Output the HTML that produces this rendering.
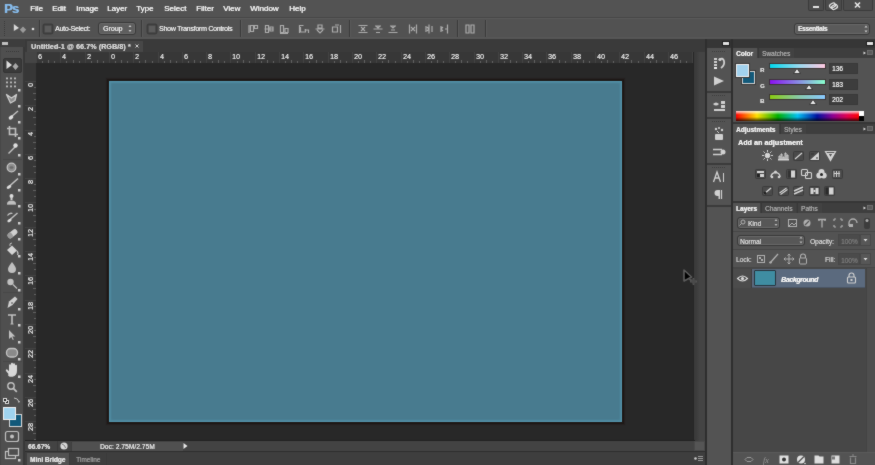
<!DOCTYPE html>
<html><head><meta charset="utf-8">
<style>
*{margin:0;padding:0;box-sizing:border-box}
html,body{width:875px;height:465px;overflow:hidden;background:#535353;font-family:"Liberation Sans",sans-serif;color:#e0e0e0}
.a{position:absolute}
svg{position:absolute;overflow:visible}
#menubar{left:0;top:0;width:875px;height:17px;background:#535353}
.m{position:absolute;top:3.5px;font-size:8px;color:#f2f2f2;line-height:10px;text-shadow:0.4px 0 0 #f2f2f2}
#logo{left:4px;top:1px;font-size:13px;font-weight:bold;color:#86baea;letter-spacing:-0.8px;line-height:15px;text-shadow:0.5px 0 0 #86baea}
#opts{left:0;top:17px;width:875px;height:22px;background:#525252;border-top:1px solid #474747;box-shadow:inset 0 1px 0 #5a5a5a,inset 0 -2px 0 #565656}
.sep{position:absolute;top:20px;width:2px;height:17px;background:#3a3a3a;border-right:1px solid #5a5a5a}
.chk{position:absolute;width:8px;height:8px;background:#5c5c5c;border:1px solid #4a4a4a;border-radius:1px;box-shadow:0 0 0 1.5px #3c3c3c}
.ot{position:absolute;font-size:7px;color:#e8e8e8;line-height:8px;white-space:nowrap;text-shadow:0.3px 0 0 currentColor}
.dd{position:absolute;background:#5e5e5e;border:1px solid #393939;border-radius:3px;box-shadow:inset 0 0 0 1px #686868}
#toolbar{left:0;top:39px;width:25px;height:426px;background:#4f4f4f;border-right:2px solid #383838;border-left:1px solid #474747}
#toolhdr{left:0;top:39px;width:25px;height:8px;background:#3d3d3d}
#docarea{left:25px;top:39px;width:680px;height:413px;background:#3a3a3a}
#tab{left:27px;top:41px;width:116px;height:11px;background:#474747}
#hruler{left:36px;top:52px;width:659px;height:11px;background:#373737}
#vruler{left:25px;top:63px;width:11px;height:378px;background:#373737}
#corner{left:25px;top:52px;width:11px;height:11px;background:#454545}
#paste{left:36px;top:63px;width:658px;height:378px;background:#282828}
#doc{left:109px;top:81px;width:513px;height:341px;background:#487b8f;box-shadow:0 0 0 2px #1d1816,0 0 1px 3px #242020,inset 0 0 1px 1px #5697ad,inset 0 0 2px 2px #4e88a0}
#vscroll{left:693px;top:52px;width:12px;height:389px;background:linear-gradient(90deg,#262626 0,#262626 1px,#3a3a3a 1px,#3b3b3b 3px,#444 7px,#444)}
#status{left:25px;top:441px;width:670px;height:10px;background:#434343;box-shadow:0 -1px 0 #222}
#bottombar{left:25px;top:451px;width:680px;height:14px;background:#3e3e3e;border-top:1px solid #2e2e2e}
#iconcol{left:705px;top:39px;width:27px;height:426px;background:#363636}
#iconbox{left:707px;top:48px;width:24px;height:417px;background:#535353}
#panel{left:731px;top:39px;width:144px;height:426px;background:#363636}
.rl{position:absolute;font-size:7px;line-height:7px;color:#e0e0e0;text-shadow:0.3px 0 0 #e0e0e0}
.rv{width:5px;word-break:break-all;text-align:center;line-height:6px;font-size:6px}
</style></head><body><svg width="0" height="0" style="position:absolute"><filter id="bl" x="0" y="0" width="100%" height="100%" color-interpolation-filters="sRGB"><feConvolveMatrix order="3" kernelMatrix="1 2 1 2 24 2 1 2 1" edgeMode="duplicate"/></filter></svg><div id="wrap" style="position:absolute;left:0;top:0;width:875px;height:465px;background:#535353;filter:url(#bl)">
<div id="menubar" class="a">
  <div id="logo" class="a">Ps</div>
  <span class="m" style="left:30px">File</span>
  <span class="m" style="left:52px">Edit</span>
  <span class="m" style="left:76px">Image</span>
  <span class="m" style="left:107px">Layer</span>
  <span class="m" style="left:136px">Type</span>
  <span class="m" style="left:164px">Select</span>
  <span class="m" style="left:196px">Filter</span>
  <span class="m" style="left:223px">View</span>
  <span class="m" style="left:250px">Window</span>
  <span class="m" style="left:289px">Help</span>
</div>
<div id="opts" class="a"></div>

<svg style="left:0;top:0" width="875" height="40">
 <g fill="#3a3a3a">
  <rect x="4" y="21" width="1" height="1"/><rect x="4" y="23" width="1" height="1"/><rect x="4" y="25" width="1" height="1"/><rect x="4" y="27" width="1" height="1"/><rect x="4" y="29" width="1" height="1"/><rect x="4" y="31" width="1" height="1"/><rect x="4" y="33" width="1" height="1"/><rect x="4" y="35" width="1" height="1"/>
 </g>
 <path d="M13.5 23.5 L13.5 31.5 L19.5 28 Z" fill="#d8d8d8" stroke="#3a3a3a" stroke-width="0.5"/>
 <path d="M23 26 L26.5 29.8 L23 33.5 L19.5 29.8 Z" fill="#9a9a9a" stroke="#3e3e3e" stroke-width="0.5"/>
 <circle cx="33" cy="29" r="1.3" fill="#dcdcdc"/>
</svg>
<div class="sep" style="left:39px"></div>
<div class="chk" style="left:44px;top:24.5px"></div>
<span class="ot" style="left:55px;top:25px;letter-spacing:-0.25px">Auto-Select:</span>
<div class="dd" style="left:98px;top:22px;width:38px;height:13px"></div>
<span class="ot" style="left:103px;top:25px">Group</span>
<svg style="left:0;top:0" width="875" height="40"><path d="M128.5 27 l1.5 -2 l1.5 2 Z M128.5 30 l1.5 2 l1.5 -2 Z" fill="#cfcfcf"/></svg>
<div class="sep" style="left:141px"></div>
<div class="chk" style="left:148px;top:24.5px"></div>
<span class="ot" style="left:159px;top:25px;letter-spacing:-0.25px">Show Transform Controls</span>
<div class="sep" style="left:240px"></div>
<svg style="left:0;top:0" width="875" height="40" fill="none" stroke="#acacac" stroke-width="1.2">
 <!-- align top/vcenter/bottom -->
 <g transform="translate(253,29)"><path d="M-4 -4 v8 M-2.5 -3.5 h3 v6 h-3 z M1.5 -3.5 h3 v3 h-3z" /></g>
 <g transform="translate(269,29)"><path d="M-4.5 0 h9 M-3.5 -3.5 h3 v7 h-3z M1 -2 h3 v4 h-3z"/></g>
 <g transform="translate(284,29)"><path d="M-4 4.5 h8 M-3.5 -3.5 h3 v7 h-3z M1 -0.5 h3 v4 h-3z"/></g>
 <g transform="translate(304,29)"><path d="M-4.5 -4 v8 M-4.5 -3.5 h4 M-3.5 -2 v5 h5 v-3 M0.5 1 h4 v3"/></g>
 <g transform="translate(320,29)"><path d="M-4.5 0 h9 M-2 -4 h4 v3 h-4z M-3 1 l3 3 l3 -3"/></g>
 <g transform="translate(336,29)"><path d="M4.5 -4 v8 M-3.5 -2 h5 v5 h-5z M-1 -4 h4"/></g>
</svg>
<div class="sep" style="left:349px"></div>
<svg style="left:0;top:0" width="875" height="40" fill="none" stroke="#acacac" stroke-width="1.2">
 <g transform="translate(363,29)"><path d="M-4.5 -3.5 h9 M-4.5 3.5 h9 M-2 -2 l2 2 l2 -2 M-2 2 l2-2 l2 2"/></g>
 <g transform="translate(378,29)"><path d="M-4.5 0 h9 M-3 -3 h6 M-2 3.5 h4 M-2 -3 l2 2 l2 -2"/></g>
 <g transform="translate(393,29)"><path d="M-4.5 3.5 h9 M-3 -3 h6 M-2 1 h4 M-2 -3 l2 2 l2 -2"/></g>
 <g transform="translate(413,29)"><path d="M-3.5 -4.5 v9 M3.5 -4.5 v9 M-2 -2 l2 2 l-2 2 M2 -2 l-2 2 l2 2"/></g>
 <g transform="translate(429,29)"><path d="M0 -4.5 v9 M-3 -3 v6 M3 -3 v6 M-2 -2 l2 2 l-2 2"/></g>
 <g transform="translate(444,29)"><path d="M3.5 -4.5 v9 M-3 -3 v6 M-1 -2 l-2 2 l2 2 M1 0 h2"/></g>
</svg>
<div class="sep" style="left:457px"></div>
<svg style="left:0;top:0" width="875" height="40" fill="none" stroke="#acacac" stroke-width="1.2">
 <g transform="translate(470,29)"><path d="M-4 -4 v8 h3 v-8 z M1 -4 v8 h3 v-8z"/></g>
</svg>
<div class="sep" style="left:485px"></div>
<div class="dd" style="left:794px;top:23px;width:76px;height:12px;background:#5a5a5a"></div>
<span class="ot" style="left:798px;top:25px;font-weight:bold;font-size:6.5px;letter-spacing:-0.3px">Essentials</span>
<svg style="left:0;top:0" width="875" height="40"><path d="M864.5 27.5 l1.5 -2 l1.5 2 Z M864.5 30.5 l1.5 2 l1.5 -2 Z" fill="#cfcfcf"/></svg>
<div class="a" style="left:808px;top:0;width:16px;height:11px;background:#4c4c4c;border-radius:0 0 2px 2px;border:1px solid #3a3a3a;border-top:0"></div><div class="a" style="left:825px;top:0;width:17px;height:11px;background:#4c4c4c;border-radius:0 0 2px 2px;border:1px solid #3a3a3a;border-top:0"></div><div class="a" style="left:843px;top:0;width:30px;height:11px;background:#4c4c4c;border-radius:0 0 2px 2px;border:1px solid #3a3a3a;border-top:0"></div>
<svg style="left:0;top:0" width="875" height="20">
 
 <rect x="813" y="6" width="6" height="2" fill="#e4e4e4"/>
 <g fill="none" stroke="#e4e4e4" stroke-width="1.3"><rect x="829.5" y="3.5" width="6" height="4" rx="2" transform="rotate(-30 832.5 5.5)"/><rect x="831.5" y="5" width="6" height="4" rx="2" transform="rotate(-30 834.5 7)"/></g>
 <path d="M855 2.5 l5 5 M860 2.5 l-5 5" stroke="#e8e8e8" stroke-width="1.6"/>
</svg>

<div id="toolbar" class="a"></div>
<div id="toolhdr" class="a"></div>
<svg style="left:0;top:0" width="30" height="465"><rect x="2" y="42" width="6" height="3" fill="#c0c0c0"/><path d="M6 51.5 h13" stroke="#383838" stroke-dasharray="1 1"/><rect x="3.5" y="58.5" width="18" height="14" rx="1.5" fill="#3a3a3a" stroke="#333"/><path d="M6.5 60.5 L6.5 69 L12 65 Z" fill="#dcdcdc"/><path d="M15.5 63 L18.5 66.5 L15.5 70 L12.5 66.5 Z" fill="#a8a8a8"/><rect x="6" y="77.5" width="2" height="1.8" fill="#b8b8b8"/><rect x="6" y="81.5" width="2" height="1.8" fill="#b8b8b8"/><rect x="6" y="85.5" width="2" height="1.8" fill="#b8b8b8"/><rect x="10" y="77.5" width="2" height="1.8" fill="#b8b8b8"/><rect x="10" y="81.5" width="2" height="1.8" fill="#b8b8b8"/><rect x="10" y="85.5" width="2" height="1.8" fill="#b8b8b8"/><rect x="14" y="77.5" width="2" height="1.8" fill="#b8b8b8"/><rect x="14" y="81.5" width="2" height="1.8" fill="#b8b8b8"/><rect x="14" y="85.5" width="2" height="1.8" fill="#b8b8b8"/><rect x="18" y="89" width="2.5" height="2.5" fill="#d0d0d0"/><path d="M6.5 94.5 l5 3.5 l5 -3.5 l-1.5 6 l-4.5 2.5 z" fill="#8e8e8e" stroke="#cccccc" stroke-width="1.3" stroke-linejoin="round"/><rect x="18" y="105" width="2.5" height="2.5" fill="#d0d0d0"/><path d="M11 117 l7 -6" stroke="#c0c0c0" stroke-width="1.5"/><ellipse cx="11" cy="117.5" rx="2.5" ry="1.8" fill="#dedede" transform="rotate(-35 11 117.5)"/><rect x="18" y="121" width="2.5" height="2.5" fill="#d0d0d0"/><path d="M9.5 126 v8.5 h8.5 M7 128.5 h8.5 v8.5" fill="none" stroke="#c0c0c0" stroke-width="1.6"/><rect x="18" y="137" width="2.5" height="2.5" fill="#d0d0d0"/><path d="M8.5 153.5 l7 -7" stroke="#c0c0c0" stroke-width="1.4"/><circle cx="15.5" cy="145.5" r="2.2" fill="#dedede"/><rect x="18" y="154" width="2.5" height="2.5" fill="#d0d0d0"/><path d="M3 159.5 h19" stroke="#474747"/><circle cx="11.5" cy="167.5" r="4.3" fill="#8e8e8e" stroke="#c4c4c4" stroke-width="1.3"/><ellipse cx="11.5" cy="167.5" rx="2" ry="1.2" fill="#6a6a6a"/><rect x="18" y="173" width="2.5" height="2.5" fill="#d0d0d0"/><path d="M9 186.5 l9 -8" stroke="#c0c0c0" stroke-width="1.6"/><ellipse cx="9" cy="187" rx="2.5" ry="1.5" fill="#dcdcdc" transform="rotate(-30 9 187)"/><rect x="18" y="189" width="2.5" height="2.5" fill="#d0d0d0"/><circle cx="11.5" cy="196" r="2" fill="#dcdcdc"/><path d="M11.5 197 v3" stroke="#d0d0d0" stroke-width="2"/><path d="M7 204 q0 -3.5 4.5 -3.5 q4.5 0 4.5 3.5 z" fill="#c0c0c0"/><rect x="7" y="204" width="9" height="1" fill="#9a9a9a"/><rect x="18" y="205" width="2.5" height="2.5" fill="#d0d0d0"/><path d="M9.5 220 l8 -7" stroke="#c0c0c0" stroke-width="1.5"/><path d="M7.5 215.5 q2 -3 5 -2" stroke="#c0c0c0" stroke-width="1.3" fill="none"/><ellipse cx="9.5" cy="220.5" rx="2.3" ry="1.4" fill="#dcdcdc" transform="rotate(-30 9.5 220.5)"/><rect x="18" y="222" width="2.5" height="2.5" fill="#d0d0d0"/><rect x="7" y="231" width="11" height="5.5" rx="2.5" fill="#d0d0d0" transform="rotate(-38 12.5 233.75)"/><rect x="7" y="231" width="5" height="5.5" rx="2" fill="#9a9a9a" transform="rotate(-38 12.5 233.75)"/><rect x="18" y="238" width="2.5" height="2.5" fill="#d0d0d0"/><path d="M7 250 l5 -4.5 l5 5 l-5 4.5 z" fill="#d4d4d4"/><path d="M10 246 q-1 -3 2 -3" stroke="#c0c0c0" fill="none"/><path d="M17 251 q1.5 2 0.5 4" stroke="#c0c0c0" stroke-width="1.3" fill="none"/><rect x="18" y="255" width="2.5" height="2.5" fill="#d0d0d0"/><path d="M12 262 q-4 5 -4 7 a4 4 0 0 0 8 0 q0 -2 -4 -7z" fill="#c0c0c0"/><rect x="18" y="272" width="2.5" height="2.5" fill="#d0d0d0"/><circle cx="10.5" cy="282" r="3.2" fill="#c0c0c0"/><path d="M13 284.5 l4 4" stroke="#c0c0c0" stroke-width="1.3"/><rect x="18" y="289" width="2.5" height="2.5" fill="#d0d0d0"/><path d="M3 292.5 h19" stroke="#474747"/><path d="M7.5 308 l1.5 -6.5 l6 -5 l2.5 2.5 l-5 6 z" fill="#d0d0d0"/><circle cx="12" cy="303" r="1" fill="#7a7a7a"/><rect x="18" y="308" width="2.5" height="2.5" fill="#d0d0d0"/><path d="M8 315 h8 M12 315 v9" stroke="#c0c0c0" stroke-width="1.6"/><path d="M10.5 324 h3" stroke="#c0c0c0"/><rect x="18" y="324" width="2.5" height="2.5" fill="#d0d0d0"/><path d="M9 330 v9 l2.3-2 l1.5 3 l1-.5 l-1.5-3 h3 z" fill="#c0c0c0"/><rect x="18" y="341" width="2.5" height="2.5" fill="#d0d0d0"/><rect x="6.5" y="348.5" width="11" height="8.5" rx="4" fill="#8a8a8a" stroke="#c4c4c4" stroke-width="1.3"/><path d="M3 361.5 h19" stroke="#474747"/><rect x="18" y="358" width="2.5" height="2.5" fill="#d0d0d0"/><path d="M8.5 374 l-2.5 -3 a1 1 0 0 1 1.6 -1.2 l1.4 1.5 v-6 a1 1 0 0 1 2 0 v4 v-5.5 a1 1 0 0 1 2 0 v5.5 v-5 a1 1 0 0 1 2 0 v5 v-3.5 a1 1 0 0 1 2 0 v5 q0 5 -4.5 6 h-2 q-1.5 0 -2.5 -1.5 z" fill="#d8d8d8"/><rect x="18" y="375.5" width="2.5" height="2.5" fill="#d0d0d0"/><circle cx="11" cy="386" r="3.2" fill="none" stroke="#c0c0c0" stroke-width="1.4"/><path d="M13.3 388.3 l3.5 3.5" stroke="#c0c0c0" stroke-width="1.8"/><rect x="5.5" y="400.5" width="3" height="3" fill="#222" stroke="#ddd"/><rect x="3.5" y="398.5" width="3" height="3" fill="#222" stroke="#ddd"/><path d="M14 398 q4 0 5 4 M18 402 l1.5 0 l-0.8 -1.2" fill="none" stroke="#c0c0c0" stroke-width="1"/><rect x="9.5" y="414.5" width="12" height="12" fill="#12597a" stroke="#d5d5d5" stroke-width="1"/><rect x="3.5" y="407.5" width="12" height="12" fill="#9fd3ef" stroke="#f2f2f2" stroke-width="1"/><rect x="5.5" y="431.5" width="13" height="10" rx="2" fill="none" stroke="#c0c0c0" stroke-width="1.2"/><circle cx="12" cy="436.5" r="2" fill="#c0c0c0"/><rect x="5.5" y="451.5" width="10" height="7" fill="none" stroke="#c0c0c0" stroke-width="1.2"/><rect x="8.5" y="448.5" width="10" height="7" fill="#4f4f4f" stroke="#c0c0c0" stroke-width="1.2"/><rect x="18" y="459" width="2.5" height="2.5" fill="#d0d0d0"/></svg>
<div id="docarea" class="a"></div>
<div id="tab" class="a"></div>
<span class="ot" style="left:31px;top:43px;font-size:7px;font-weight:bold;color:#d4d4d4;letter-spacing:0.15px">Untitled-1 @ 66.7% (RGB/8) *</span>
<svg style="left:0;top:0" width="200" height="60"><path d="M135.5 44.5 l3 3 M138.5 44.5 l-3 3" stroke="#d0d0d0" stroke-width="1"/></svg>
<div id="corner" class="a"></div>
<div id="hruler" class="a"></div>
<div id="vruler" class="a"></div>
<svg style="left:0;top:0" width="875" height="465"><path d="M36.5 52 v11" stroke="#434343"/><path d="M42.5 61 v2" stroke="#626262"/><path d="M48.5 60 v3" stroke="#626262"/><path d="M54.5 61 v2" stroke="#626262"/><path d="M60.5 52 v11" stroke="#434343"/><path d="M66.5 61 v2" stroke="#626262"/><path d="M73.5 60 v3" stroke="#626262"/><path d="M79.5 61 v2" stroke="#626262"/><path d="M85.5 52 v11" stroke="#434343"/><path d="M91.5 61 v2" stroke="#626262"/><path d="M97.5 60 v3" stroke="#626262"/><path d="M103.5 61 v2" stroke="#626262"/><path d="M109.5 52 v11" stroke="#434343"/><path d="M115.5 61 v2" stroke="#626262"/><path d="M121.5 60 v3" stroke="#626262"/><path d="M127.5 61 v2" stroke="#626262"/><path d="M133.5 52 v11" stroke="#434343"/><path d="M139.5 61 v2" stroke="#626262"/><path d="M145.5 60 v3" stroke="#626262"/><path d="M152.5 61 v2" stroke="#626262"/><path d="M158.5 52 v11" stroke="#434343"/><path d="M164.5 61 v2" stroke="#626262"/><path d="M170.5 60 v3" stroke="#626262"/><path d="M176.5 61 v2" stroke="#626262"/><path d="M182.5 52 v11" stroke="#434343"/><path d="M188.5 61 v2" stroke="#626262"/><path d="M194.5 60 v3" stroke="#626262"/><path d="M200.5 61 v2" stroke="#626262"/><path d="M206.5 52 v11" stroke="#434343"/><path d="M212.5 61 v2" stroke="#626262"/><path d="M218.5 60 v3" stroke="#626262"/><path d="M224.5 61 v2" stroke="#626262"/><path d="M230.5 52 v11" stroke="#434343"/><path d="M237.5 61 v2" stroke="#626262"/><path d="M243.5 60 v3" stroke="#626262"/><path d="M249.5 61 v2" stroke="#626262"/><path d="M255.5 52 v11" stroke="#434343"/><path d="M261.5 61 v2" stroke="#626262"/><path d="M267.5 60 v3" stroke="#626262"/><path d="M273.5 61 v2" stroke="#626262"/><path d="M279.5 52 v11" stroke="#434343"/><path d="M285.5 61 v2" stroke="#626262"/><path d="M291.5 60 v3" stroke="#626262"/><path d="M297.5 61 v2" stroke="#626262"/><path d="M303.5 52 v11" stroke="#434343"/><path d="M309.5 61 v2" stroke="#626262"/><path d="M316.5 60 v3" stroke="#626262"/><path d="M322.5 61 v2" stroke="#626262"/><path d="M328.5 52 v11" stroke="#434343"/><path d="M334.5 61 v2" stroke="#626262"/><path d="M340.5 60 v3" stroke="#626262"/><path d="M346.5 61 v2" stroke="#626262"/><path d="M352.5 52 v11" stroke="#434343"/><path d="M358.5 61 v2" stroke="#626262"/><path d="M364.5 60 v3" stroke="#626262"/><path d="M370.5 61 v2" stroke="#626262"/><path d="M376.5 52 v11" stroke="#434343"/><path d="M382.5 61 v2" stroke="#626262"/><path d="M388.5 60 v3" stroke="#626262"/><path d="M395.5 61 v2" stroke="#626262"/><path d="M401.5 52 v11" stroke="#434343"/><path d="M407.5 61 v2" stroke="#626262"/><path d="M413.5 60 v3" stroke="#626262"/><path d="M419.5 61 v2" stroke="#626262"/><path d="M425.5 52 v11" stroke="#434343"/><path d="M431.5 61 v2" stroke="#626262"/><path d="M437.5 60 v3" stroke="#626262"/><path d="M443.5 61 v2" stroke="#626262"/><path d="M449.5 52 v11" stroke="#434343"/><path d="M455.5 61 v2" stroke="#626262"/><path d="M461.5 60 v3" stroke="#626262"/><path d="M467.5 61 v2" stroke="#626262"/><path d="M474.5 52 v11" stroke="#434343"/><path d="M480.5 61 v2" stroke="#626262"/><path d="M486.5 60 v3" stroke="#626262"/><path d="M492.5 61 v2" stroke="#626262"/><path d="M498.5 52 v11" stroke="#434343"/><path d="M504.5 61 v2" stroke="#626262"/><path d="M510.5 60 v3" stroke="#626262"/><path d="M516.5 61 v2" stroke="#626262"/><path d="M522.5 52 v11" stroke="#434343"/><path d="M528.5 61 v2" stroke="#626262"/><path d="M534.5 60 v3" stroke="#626262"/><path d="M540.5 61 v2" stroke="#626262"/><path d="M546.5 52 v11" stroke="#434343"/><path d="M552.5 61 v2" stroke="#626262"/><path d="M559.5 60 v3" stroke="#626262"/><path d="M565.5 61 v2" stroke="#626262"/><path d="M571.5 52 v11" stroke="#434343"/><path d="M577.5 61 v2" stroke="#626262"/><path d="M583.5 60 v3" stroke="#626262"/><path d="M589.5 61 v2" stroke="#626262"/><path d="M595.5 52 v11" stroke="#434343"/><path d="M601.5 61 v2" stroke="#626262"/><path d="M607.5 60 v3" stroke="#626262"/><path d="M613.5 61 v2" stroke="#626262"/><path d="M619.5 52 v11" stroke="#434343"/><path d="M625.5 61 v2" stroke="#626262"/><path d="M631.5 60 v3" stroke="#626262"/><path d="M638.5 61 v2" stroke="#626262"/><path d="M644.5 52 v11" stroke="#434343"/><path d="M650.5 61 v2" stroke="#626262"/><path d="M656.5 60 v3" stroke="#626262"/><path d="M662.5 61 v2" stroke="#626262"/><path d="M668.5 52 v11" stroke="#434343"/><path d="M674.5 61 v2" stroke="#626262"/><path d="M680.5 60 v3" stroke="#626262"/><path d="M686.5 61 v2" stroke="#626262"/><path d="M692.5 52 v11" stroke="#434343"/><path d="M25 81.5 h11" stroke="#434343"/><path d="M34 87.5 h2" stroke="#626262"/><path d="M33 93.5 h3" stroke="#626262"/><path d="M34 99.5 h2" stroke="#626262"/><path d="M25 105.5 h11" stroke="#434343"/><path d="M34 111.5 h2" stroke="#626262"/><path d="M33 117.5 h3" stroke="#626262"/><path d="M34 124.5 h2" stroke="#626262"/><path d="M25 130.5 h11" stroke="#434343"/><path d="M34 136.5 h2" stroke="#626262"/><path d="M33 142.5 h3" stroke="#626262"/><path d="M34 148.5 h2" stroke="#626262"/><path d="M25 154.5 h11" stroke="#434343"/><path d="M34 160.5 h2" stroke="#626262"/><path d="M33 166.5 h3" stroke="#626262"/><path d="M34 172.5 h2" stroke="#626262"/><path d="M25 178.5 h11" stroke="#434343"/><path d="M34 184.5 h2" stroke="#626262"/><path d="M33 190.5 h3" stroke="#626262"/><path d="M34 196.5 h2" stroke="#626262"/><path d="M25 202.5 h11" stroke="#434343"/><path d="M34 209.5 h2" stroke="#626262"/><path d="M33 215.5 h3" stroke="#626262"/><path d="M34 221.5 h2" stroke="#626262"/><path d="M25 227.5 h11" stroke="#434343"/><path d="M34 233.5 h2" stroke="#626262"/><path d="M33 239.5 h3" stroke="#626262"/><path d="M34 245.5 h2" stroke="#626262"/><path d="M25 251.5 h11" stroke="#434343"/><path d="M34 257.5 h2" stroke="#626262"/><path d="M33 263.5 h3" stroke="#626262"/><path d="M34 269.5 h2" stroke="#626262"/><path d="M25 275.5 h11" stroke="#434343"/><path d="M34 281.5 h2" stroke="#626262"/><path d="M33 288.5 h3" stroke="#626262"/><path d="M34 294.5 h2" stroke="#626262"/><path d="M25 300.5 h11" stroke="#434343"/><path d="M34 306.5 h2" stroke="#626262"/><path d="M33 312.5 h3" stroke="#626262"/><path d="M34 318.5 h2" stroke="#626262"/><path d="M25 324.5 h11" stroke="#434343"/><path d="M34 330.5 h2" stroke="#626262"/><path d="M33 336.5 h3" stroke="#626262"/><path d="M34 342.5 h2" stroke="#626262"/><path d="M25 348.5 h11" stroke="#434343"/><path d="M34 354.5 h2" stroke="#626262"/><path d="M33 360.5 h3" stroke="#626262"/><path d="M34 367.5 h2" stroke="#626262"/><path d="M25 373.5 h11" stroke="#434343"/><path d="M34 379.5 h2" stroke="#626262"/><path d="M33 385.5 h3" stroke="#626262"/><path d="M34 391.5 h2" stroke="#626262"/><path d="M25 397.5 h11" stroke="#434343"/><path d="M34 403.5 h2" stroke="#626262"/><path d="M33 409.5 h3" stroke="#626262"/><path d="M34 415.5 h2" stroke="#626262"/><path d="M25 421.5 h11" stroke="#434343"/><path d="M34 427.5 h2" stroke="#626262"/><path d="M33 433.5 h3" stroke="#626262"/><path d="M34 439.5 h2" stroke="#626262"/></svg><span class="rl" style="left:38px;top:53px">6</span><span class="rl" style="left:62px;top:53px">4</span><span class="rl" style="left:87px;top:53px">2</span><span class="rl" style="left:111px;top:53px">0</span><span class="rl" style="left:135px;top:53px">2</span><span class="rl" style="left:160px;top:53px">4</span><span class="rl" style="left:184px;top:53px">6</span><span class="rl" style="left:208px;top:53px">8</span><span class="rl" style="left:232px;top:53px">10</span><span class="rl" style="left:257px;top:53px">12</span><span class="rl" style="left:281px;top:53px">14</span><span class="rl" style="left:305px;top:53px">16</span><span class="rl" style="left:330px;top:53px">18</span><span class="rl" style="left:354px;top:53px">20</span><span class="rl" style="left:378px;top:53px">22</span><span class="rl" style="left:403px;top:53px">24</span><span class="rl" style="left:427px;top:53px">26</span><span class="rl" style="left:451px;top:53px">28</span><span class="rl" style="left:476px;top:53px">30</span><span class="rl" style="left:500px;top:53px">32</span><span class="rl" style="left:524px;top:53px">34</span><span class="rl" style="left:548px;top:53px">36</span><span class="rl" style="left:573px;top:53px">38</span><span class="rl" style="left:597px;top:53px">40</span><span class="rl" style="left:621px;top:53px">42</span><span class="rl" style="left:646px;top:53px">44</span><span class="rl" style="left:670px;top:53px">46</span><span class="rl" style="left:27px;top:87px;transform:rotate(-90deg);transform-origin:0 0;">0</span><span class="rl" style="left:27px;top:111px;transform:rotate(-90deg);transform-origin:0 0;">2</span><span class="rl" style="left:27px;top:136px;transform:rotate(-90deg);transform-origin:0 0;">4</span><span class="rl" style="left:27px;top:160px;transform:rotate(-90deg);transform-origin:0 0;">6</span><span class="rl" style="left:27px;top:184px;transform:rotate(-90deg);transform-origin:0 0;">8</span><span class="rl" style="left:27px;top:212px;transform:rotate(-90deg);transform-origin:0 0;">10</span><span class="rl" style="left:27px;top:237px;transform:rotate(-90deg);transform-origin:0 0;">12</span><span class="rl" style="left:27px;top:261px;transform:rotate(-90deg);transform-origin:0 0;">14</span><span class="rl" style="left:27px;top:285px;transform:rotate(-90deg);transform-origin:0 0;">16</span><span class="rl" style="left:27px;top:310px;transform:rotate(-90deg);transform-origin:0 0;">18</span><span class="rl" style="left:27px;top:334px;transform:rotate(-90deg);transform-origin:0 0;">20</span><span class="rl" style="left:27px;top:358px;transform:rotate(-90deg);transform-origin:0 0;">22</span><span class="rl" style="left:27px;top:383px;transform:rotate(-90deg);transform-origin:0 0;">24</span><span class="rl" style="left:27px;top:407px;transform:rotate(-90deg);transform-origin:0 0;">26</span><span class="rl" style="left:27px;top:431px;transform:rotate(-90deg);transform-origin:0 0;">28</span>
<div id="paste" class="a"></div>
<div id="doc" class="a"></div>
<div id="vscroll" class="a"></div>
<svg style="left:0;top:0" width="875" height="465">
<path d="M684 270 L684 281 L691.5 277 Z" fill="#000" stroke="#5c5c5c" stroke-width="1.6" stroke-linejoin="round"/>
<path d="M689 279 l3 1.5 M693.5 278 v7 M690 281.5 h7" stroke="#555" stroke-width="1.8"/>
<circle cx="693.5" cy="281.5" r="2.2" fill="#4a4a4a"/>
</svg>

<div id="status" class="a"></div>
<div id="bottombar" class="a"></div>

<div class="a" style="left:57px;top:441px;width:1px;height:10px;background:#3a3a3a"></div>
<div class="a" style="left:71px;top:442px;width:112px;height:9px;background:#505050;border-left:1px solid #3e3e3e"></div>
<span class="ot" style="left:28px;top:443px;font-weight:bold;color:#dedede;font-size:6.5px">66.67%</span>
<svg style="left:0;top:0" width="200" height="465">
 <circle cx="64" cy="446" r="3.6" fill="#d8d8d8"/><path d="M62 444 l2.5 1.5 l1 2.5" stroke="#777" stroke-width="1" fill="none"/>
 <path d="M183.5 443 l4 3 l-4 3 z" fill="#e8e8e8"/>
</svg>
<span class="ot" style="left:100px;top:443px;color:#e4e4e4;font-size:6.5px;letter-spacing:0.1px">Doc: 2.75M/2.75M</span>
<div class="a" style="left:27px;top:453px;width:43px;height:12px;background:#525252;border-right:1px solid #3a3a3a"></div>
<span class="ot" style="left:30px;top:456px;font-weight:bold;color:#e2e2e2;font-size:6.5px">Mini Bridge</span>
<span class="ot" style="left:76px;top:456px;color:#9a9a9a;font-size:6.5px">Timeline</span>
<div class="a" style="left:106px;top:453px;width:1px;height:12px;background:#3a3a3a"></div>
<div class="a" style="left:694px;top:441px;width:11px;height:10px;background:#555;border:1px solid #4a4a4a"></div>
<svg style="left:0;top:0" width="875" height="465">
 <circle cx="695.5" cy="458.5" r="1.3" fill="#ccc"/><path d="M698 456.5 h5 M698 458.5 h5 M698 460.5 h5" stroke="#999" stroke-width="1"/>
</svg>
<div id="iconcol" class="a"></div>
<div id="iconbox" class="a"></div>
<div class="a" style="left:705px;top:39px;width:2px;height:426px;background:#2e2e2e"></div>
<div id="panel" class="a"></div>
<div class="a" style="left:723px;top:42px;width:6px;height:3px;background:#e0e0e0;box-shadow:0 0 0 1px #1e1e1e"></div>
<div class="a" style="left:867px;top:42px;width:6px;height:3px;background:#e0e0e0;box-shadow:0 0 0 1px #1e1e1e"></div>
<div class="a" style="left:732px;top:48px;width:143px;height:10px;background:#3e3e3e"></div>
<div class="a" style="left:733px;top:48px;width:24px;height:10px;background:#535353"></div>
<span class="ot" style="left:736px;top:50px;font-weight:bold;color:#ececec;font-size:6.5px">Color</span>
<div class="a" style="left:758px;top:48px;width:36px;height:10px;background:#424242;border-left:1px solid #383838"></div>
<span class="ot" style="left:762px;top:50px;color:#a8a8a8;font-size:6.5px">Swatches</span>
<svg style="left:0;top:0" width="875" height="465"><path d="M863.5 51.5 l2.5 1.5 l-2.5 1.5 z" fill="#ddd"/><rect x="867.5" y="50.5" width="5" height="4" fill="#5a5a5a" stroke="#777" stroke-width="0.8"/></svg>
<div class="a" style="left:732px;top:58px;width:143px;height:64px;background:#535353"></div>
<div class="a" style="left:732px;top:124px;width:143px;height:10px;background:#3e3e3e"></div>
<div class="a" style="left:733px;top:124px;width:46px;height:10px;background:#535353"></div>
<span class="ot" style="left:736px;top:126px;font-weight:bold;color:#ececec;font-size:6.5px">Adjustments</span>
<div class="a" style="left:780px;top:124px;width:26px;height:10px;background:#424242;border-left:1px solid #383838"></div>
<span class="ot" style="left:784px;top:126px;color:#a8a8a8;font-size:6.5px">Styles</span>
<svg style="left:0;top:0" width="875" height="465"><path d="M863.5 127.5 l2.5 1.5 l-2.5 1.5 z" fill="#ddd"/><rect x="867.5" y="126.5" width="5" height="4" fill="#5a5a5a" stroke="#777" stroke-width="0.8"/></svg>
<div class="a" style="left:732px;top:134px;width:143px;height:67px;background:#535353"></div>
<div class="a" style="left:732px;top:203px;width:143px;height:10px;background:#3e3e3e"></div>
<div class="a" style="left:733px;top:203px;width:27px;height:10px;background:#535353"></div>
<span class="ot" style="left:736px;top:205px;font-weight:bold;color:#ececec;font-size:6.5px">Layers</span>
<div class="a" style="left:761px;top:203px;width:35px;height:10px;background:#424242;border-left:1px solid #383838"></div>
<span class="ot" style="left:765px;top:205px;color:#a8a8a8;font-size:6.5px">Channels</span>
<div class="a" style="left:797px;top:203px;width:25px;height:10px;background:#424242;border-left:1px solid #383838"></div>
<span class="ot" style="left:801px;top:205px;color:#a8a8a8;font-size:6.5px">Paths</span>
<svg style="left:0;top:0" width="875" height="465"><path d="M863.5 206.5 l2.5 1.5 l-2.5 1.5 z" fill="#ddd"/><rect x="867.5" y="205.5" width="5" height="4" fill="#5a5a5a" stroke="#777" stroke-width="0.8"/></svg>
<div class="a" style="left:732px;top:213px;width:143px;height:252px;background:#535353"></div>
<div class="a" style="left:742px;top:71px;width:13px;height:13px;background:#135a7a;border:1px solid #d0d0d0;box-shadow:0 0 0 1px #3a3a3a"></div>
<div class="a" style="left:736px;top:64px;width:13px;height:13px;background:#a2d2ee;border:1px solid #f0f0f0;box-shadow:0 0 0 1px #3a3a3a"></div>
<div class="a" style="left:770px;top:64px;width:55px;height:4px;background:linear-gradient(90deg,#00d8ee,#9fd8ee 55%,#ffc8e0);box-shadow:0 0 0 1px #3c3434"></div>
<span class="ot" style="left:760px;top:66px;font-size:6px;font-weight:bold;color:#d8d8d8">R</span>
<div class="a" style="left:829px;top:63px;width:29px;height:11px;background:#3d3d3d;border:1px solid #393939"></div>
<span class="ot" style="left:832px;top:65px;font-size:6.5px;color:#e8e8e8">136</span>
<div class="a" style="left:770px;top:80px;width:55px;height:4px;background:linear-gradient(90deg,#8a10f0,#88a0e0 60%,#88ffcc);box-shadow:0 0 0 1px #3c3434"></div>
<span class="ot" style="left:760px;top:82px;font-size:6px;font-weight:bold;color:#d8d8d8">G</span>
<div class="a" style="left:829px;top:79px;width:29px;height:11px;background:#3d3d3d;border:1px solid #393939"></div>
<span class="ot" style="left:832px;top:81px;font-size:6.5px;color:#e8e8e8">183</span>
<div class="a" style="left:770px;top:95px;width:55px;height:4px;background:linear-gradient(90deg,#88cc10,#88c8b0 55%,#88c8ff);box-shadow:0 0 0 1px #3c3434"></div>
<span class="ot" style="left:760px;top:97px;font-size:6px;font-weight:bold;color:#d8d8d8">B</span>
<div class="a" style="left:829px;top:94px;width:29px;height:11px;background:#3d3d3d;border:1px solid #393939"></div>
<span class="ot" style="left:832px;top:96px;font-size:6.5px;color:#e8e8e8">202</span>
<svg style="left:0;top:0" width="875" height="465"><path d="M793.5 73.5 l3.5 -5 l3.5 5 z" fill="#e8e8e8" stroke="#2a2a2a" stroke-width="0.8"/><path d="M805.5 89.5 l3.5 -5 l3.5 5 z" fill="#e8e8e8" stroke="#2a2a2a" stroke-width="0.8"/><path d="M809.5 104.5 l3.5 -5 l3.5 5 z" fill="#e8e8e8" stroke="#2a2a2a" stroke-width="0.8"/></svg>
<div class="a" style="left:736px;top:111px;width:123px;height:10px;background:linear-gradient(90deg,#ff0000,#ffe000 17%,#00b000 34%,#00c0f0 50%,#0010a0 66%,#900090 79%,#e00050 90%,#ff0000);"></div>
<div class="a" style="left:736px;top:111px;width:123px;height:10px;background:linear-gradient(180deg,rgba(255,255,255,0.85),rgba(255,255,255,0) 38%,rgba(0,0,0,0) 60%,rgba(0,0,0,0.75))"></div>
<div class="a" style="left:859px;top:111px;width:5px;height:5px;background:#fff"></div>
<div class="a" style="left:859px;top:116px;width:5px;height:5px;background:#000"></div>
<span class="ot" style="left:738px;top:139px;font-weight:bold;color:#f0f0f0;font-size:7px;letter-spacing:0.1px">Add an adjustment</span>
<svg style="left:0;top:0" width="875" height="465"><g transform="translate(767.5,155.5)" stroke="#d4d4d4" stroke-width="1"><circle r="2.3" fill="#d4d4d4"/><path d="M0 -5.5 v2 M0 3.5 v2 M-5.5 0 h2 M3.5 0 h2 M-4 -4 l1.4 1.4 M2.6 2.6 l1.4 1.4 M4 -4 l-1.4 1.4 M-2.6 2.6 l-1.4 1.4"/></g><g transform="translate(778,151)"><path d="M1 8 v-3 h1 v3 M3 8 v-5 h1 v5 M5 8 v-2 h1 v2 M7 8 v-6 h1 v6 M9 8 v-4 h1 v4" stroke="#d4d4d4" fill="none"/><rect x="0" y="8" width="11" height="1.5" fill="#d4d4d4"/></g><g transform="translate(793,151)"><rect x="0.5" y="0.5" width="10" height="9" rx="1" fill="#4a4a4a" stroke="#3c3c3c"/><path d="M2 8 l7 -6" stroke="#d4d4d4" stroke-width="1.2"/></g><g transform="translate(809,151)"><rect x="0.5" y="0.5" width="10" height="9" rx="1" fill="#4a4a4a" stroke="#3c3c3c"/><path d="M1 9 l9 -8 v8 z" fill="#d4d4d4"/><path d="M2 3 h3 M7 7 h2" stroke="#333"/></g><path d="M825.5 151.5 h10 l-5 9 z M828 153.5 h5 l-2.5 4.5z" fill="none" stroke="#d4d4d4" stroke-width="1.2"/><g transform="translate(755,169)"><rect x="0.5" y="0.5" width="10" height="9" rx="1" fill="#4a4a4a" stroke="#3c3c3c"/><rect x="2" y="2" width="7" height="2" fill="#d4d4d4"/><rect x="2" y="5" width="3" height="3" fill="#222"/><rect x="5" y="5" width="4" height="3" fill="#d4d4d4"/></g><g transform="translate(770,169)"><path d="M1 8 a4.5 4.5 0 0 1 9 0" fill="none" stroke="#d4d4d4" stroke-width="1.5"/><circle cx="5.5" cy="3" r="1.5" fill="#d4d4d4"/><circle cx="2" cy="8" r="1.3" fill="#d4d4d4"/><circle cx="9" cy="8" r="1.3" fill="#d4d4d4"/></g><g transform="translate(786,169)"><rect x="0.5" y="0.5" width="10" height="9" rx="1" fill="#4a4a4a" stroke="#3c3c3c"/><rect x="5" y="1.5" width="4" height="7" fill="#d4d4d4"/><rect x="2" y="1.5" width="3" height="7" fill="#333"/></g><g transform="translate(801,169)" fill="none" stroke="#d4d4d4" stroke-width="1.1"><rect x="0.5" y="0.5" width="6" height="6" rx="1"/><rect x="4.5" y="3.5" width="6" height="6" rx="1"/></g><g transform="translate(821.5,174)"><circle cx="0" cy="-2" r="3" fill="#d4d4d4"/><circle cx="-2.2" cy="1.5" r="3" fill="#d4d4d4"/><circle cx="2.2" cy="1.5" r="3" fill="#d4d4d4"/><circle cx="0" cy="0.5" r="1.5" fill="#222"/></g><g transform="translate(832,169)"><rect x="0.5" y="0.5" width="10" height="9" rx="1" fill="#4a4a4a" stroke="#3c3c3c"/><path d="M2 2 v6 M4.5 2 v6 M7 2 v6 M2 4.5 h6" stroke="#d4d4d4"/></g><g transform="translate(762,186)"><rect x="0.5" y="0.5" width="10" height="9" rx="1" fill="#4a4a4a" stroke="#3c3c3c"/><path d="M2 8 l7 -6" stroke="#d4d4d4" stroke-width="1.5"/><circle cx="3" cy="7" r="1.5" fill="#222"/></g><g transform="translate(778,186)"><rect x="0.5" y="0.5" width="10" height="9" rx="1" fill="#4a4a4a" stroke="#3c3c3c"/><path d="M1.5 7 l7 -5 M2.5 8.5 l7 -5" stroke="#d4d4d4" stroke-width="1.1"/></g><g transform="translate(793,186)"><rect x="0.5" y="0.5" width="10" height="9" rx="1" fill="#4a4a4a" stroke="#3c3c3c"/><path d="M1 5 l9 -4 M1 8 l9 -4" stroke="#d4d4d4" stroke-width="1.6"/></g><g transform="translate(809,186)"><rect x="0.5" y="0.5" width="10" height="9" rx="1" fill="#4a4a4a" stroke="#3c3c3c"/><path d="M1.5 2 h3 v6 h-3z M6.5 2 h3 v6 h-3z" fill="#d4d4d4"/><rect x="4.5" y="4" width="2" height="2" fill="#d4d4d4"/></g><g transform="translate(824,186)"><rect x="0.5" y="0.5" width="10" height="9" rx="1" fill="#4a4a4a" stroke="#3c3c3c"/><rect x="1.5" y="1.5" width="3" height="7" fill="#2a2a2a"/><rect x="5" y="1.5" width="4.5" height="7" fill="#d4d4d4"/></g></svg>
<div class="a" style="left:732px;top:231px;width:143px;height:1px;background:#464646"></div>
<div class="a" style="left:732px;top:249px;width:143px;height:1px;background:#464646"></div>
<div class="a" style="left:732px;top:267px;width:143px;height:1px;background:#464646"></div>
<div class="dd" style="left:737px;top:217px;width:43px;height:12px;background:#575757"></div>
<span class="ot" style="left:748px;top:219.5px;color:#d6d6d6;font-size:6.5px">Kind</span>
<div class="dd" style="left:737px;top:235px;width:68px;height:11px;background:#575757"></div>
<span class="ot" style="left:740px;top:237.5px;color:#d6d6d6;font-size:6.5px">Normal</span>
<span class="ot" style="left:810px;top:238px;color:#d0d0d0;font-size:6.5px">Opacity:</span>
<div class="a" style="left:838px;top:234px;width:22px;height:12px;background:#4b4b4b;border:1px solid #474747"></div>
<span class="ot" style="left:841px;top:237.5px;color:#7a7a7a;font-size:6.5px">100%</span>
<div class="a" style="left:860px;top:234px;width:11px;height:12px;background:#575757;border:1px solid #484848"></div>
<span class="ot" style="left:736px;top:256px;color:#c8c8c8;font-size:6.5px">Lock:</span>
<span class="ot" style="left:825px;top:256px;color:#c8c8c8;font-size:6.5px">Fill:</span>
<div class="a" style="left:838px;top:253px;width:22px;height:12px;background:#4b4b4b;border:1px solid #474747"></div>
<span class="ot" style="left:841px;top:256.5px;color:#7a7a7a;font-size:6.5px">100%</span>
<div class="a" style="left:860px;top:253px;width:11px;height:12px;background:#575757;border:1px solid #484848"></div>
<div class="a" style="left:732px;top:268px;width:134px;height:184px;background:#474747"></div>
<div class="a" style="left:866px;top:268px;width:9px;height:184px;background:#4e4e4e;border-left:1px solid #444"></div>
<div class="a" style="left:733px;top:269px;width:19px;height:19px;background:#4c4c4c;border-right:1px solid #3e3e3e"></div>
<div class="a" style="left:752px;top:269px;width:113px;height:19px;background:#5b6a7e;border-bottom:1px solid #4a5566"></div>
<div class="a" style="left:754px;top:270px;width:22px;height:16px;background:#3f8da2;border:1.5px solid #26343e;border-radius:1px"></div>
<span class="ot" style="left:781px;top:276px;color:#f2f2f2;font-size:7px;font-style:italic;font-weight:bold;letter-spacing:-0.4px">Background</span>
<div class="a" style="left:732px;top:452px;width:143px;height:13px;background:#535353;border-top:1px solid #5a5a5a"></div>
<svg style="left:0;top:0" width="875" height="465"><path d="M774.5 221 l1.5 -2 l1.5 2z M774.5 224 l1.5 2 l1.5 -2z" fill="#bbb"/><path d="M799.5 238.5 l1.5 -2 l1.5 2z M799.5 241.5 l1.5 2 l1.5 -2z" fill="#bbb"/><path d="M863.5 239 h4 l-2 2.5z M863.5 258 h4 l-2 2.5z" fill="#ddd"/><circle cx="743" cy="222" r="2" fill="none" stroke="#b0b0b0"/><path d="M741.5 223.5 l-2 2" stroke="#b0b0b0"/><rect x="788.5" y="219.5" width="8" height="7" fill="none" stroke="#b0b0b0"/><path d="M789 226 l3 -3 l2 2 l2 -2" stroke="#b0b0b0" fill="none"/><circle cx="807" cy="223" r="3.5" fill="#b0b0b0"/><path d="M805 225 l4 -4" stroke="#555" stroke-width="1.2"/><path d="M818 219.5 h8 M822 219.5 v8 M819 219.5 v1.5 M825 219.5 v1.5" stroke="#b0b0b0" stroke-width="1.3"/><path d="M834 219 h2 M840 219 h2 M834 227 h2 M840 227 h2 M834 219 v2 M834 225 v2 M842 219 v2 M842 225 v2" stroke="#b0b0b0" stroke-width="1.2"/><path d="M849 226 v-3 a4 4 0 0 1 8 0" fill="none" stroke="#b0b0b0" stroke-width="1.3"/><rect x="849" y="224" width="4" height="3" fill="#b0b0b0"/><rect x="864" y="218" width="6" height="11" rx="2" fill="#3c3c3c"/><circle cx="867" cy="220.5" r="1.5" fill="#aaa"/><rect x="757.5" y="255.5" width="7" height="7" fill="none" stroke="#b0b0b0"/><path d="M759 257 h2 v2 h2 v2 h-2 v-2 h-2z" fill="#b0b0b0"/><path d="M770 263 l8 -9" stroke="#b0b0b0" stroke-width="1.3"/><ellipse cx="770.5" cy="262.5" rx="1.5" ry="1" fill="#b0b0b0"/><path d="M789 254 v10 M784 259 h10 M787.5 255.5 l1.5 -1.5 l1.5 1.5 M787.5 262.5 l1.5 1.5 l1.5 -1.5 M785.5 257.5 l-1.5 1.5 l1.5 1.5 M792.5 257.5 l1.5 1.5 l-1.5 1.5" stroke="#b0b0b0" fill="none"/><path d="M800.5 258 v-1.5 a2.5 2.5 0 0 1 5 0 v1.5" fill="none" stroke="#b0b0b0" stroke-width="1.1"/><rect x="799.5" y="258" width="7" height="6" rx="1" fill="none" stroke="#b0b0b0"/><path d="M737.5 278.5 q5 -5 10 0 q-5 5 -10 0z" fill="none" stroke="#dcdcdc" stroke-width="1.1"/><circle cx="742.5" cy="278.5" r="1.6" fill="#dcdcdc"/><path d="M849 277 v-1.5 a2.5 2.5 0 0 1 5 0 v1.5" fill="none" stroke="#d0d0d0" stroke-width="1.1"/><rect x="847.5" y="277" width="8" height="6" rx="1" fill="none" stroke="#d0d0d0" stroke-width="1.1"/><rect x="850.5" y="279" width="2" height="2" fill="#d0d0d0"/><path d="M745 459.5 l2 -2 h2 M745 459.5 l2 2 h2 M753 459.5 l-2 -2 h-2 M753 459.5 l-2 2 h-2" stroke="#9a9a9a" fill="none"/><text x="763" y="462.5" font-family="Liberation Serif" font-style="italic" font-size="8" fill="#9a9a9a">fx</text><rect x="779.5" y="455.5" width="9" height="8" fill="#e0e0e0"/><circle cx="784" cy="459.5" r="2" fill="#333"/><circle cx="801" cy="459.5" r="4" fill="#e0e0e0"/><path d="M798 462.5 l6 -6" stroke="#555" stroke-width="1.5"/><circle cx="805" cy="463.5" r="0.8" fill="#ddd"/><path d="M814.5 455.5 h4 l1 1 h4 v7 h-9z" fill="#dedede"/><rect x="831.5" y="455.5" width="8" height="8" fill="#dedede"/><path d="M832 456.5 h3 v3 h-3z" fill="#777"/><path d="M849.5 456.5 h7 M850.5 457.5 v6 h5 v-6" stroke="#8a8a8a" fill="none" stroke-width="1.2"/><path d="M852 455.0 h2" stroke="#8a8a8a"/></svg>
<div class="a" style="left:707px;top:91px;width:24px;height:2px;background:#3a3a3a"></div>
<div class="a" style="left:707px;top:117px;width:24px;height:2px;background:#3a3a3a"></div>
<div class="a" style="left:707px;top:163px;width:24px;height:2px;background:#3a3a3a"></div>
<div class="a" style="left:707px;top:205px;width:24px;height:2px;background:#3a3a3a"></div>
<svg style="left:0;top:0" width="875" height="465"><path d="M712 51.5 h14" stroke="#3c3c3c" stroke-dasharray="1 1"/><path d="M712 95.5 h14" stroke="#3c3c3c" stroke-dasharray="1 1"/><path d="M712 121.5 h14" stroke="#3c3c3c" stroke-dasharray="1 1"/><path d="M712 167.5 h14" stroke="#3c3c3c" stroke-dasharray="1 1"/><rect x="714" y="58" width="3" height="2" fill="#d0d0d0"/><rect x="714" y="61" width="3" height="2" fill="#d0d0d0"/><rect x="714" y="64" width="3" height="2" fill="#d0d0d0"/><rect x="714" y="67" width="3" height="2" fill="#f0f0f0"/><path d="M719 60 q4 -3 5 1 q1 4 -3 7" fill="none" stroke="#d0d0d0" stroke-width="1.8"/><circle cx="720" cy="59.5" r="1.6" fill="#d0d0d0"/><path d="M714 76.5 l10 4.5 l-10 4.5 z" fill="#d0d0d0"/><path d="M713 104 q3 -3 6 0 q-3 3 -6 0z" fill="#d0d0d0"/><rect x="721" y="101" width="4" height="3" fill="#d0d0d0"/><rect x="721" y="105" width="4" height="3" fill="#d0d0d0"/><rect x="714" y="109" width="11" height="2" fill="#d0d0d0"/><rect x="715" y="134" width="8" height="6" rx="1" fill="#d0d0d0"/><circle cx="716" cy="129" r="1.2" fill="#d0d0d0"/><circle cx="719" cy="128" r="1" fill="#d0d0d0"/><circle cx="722" cy="130" r="1.2" fill="#d0d0d0"/><path d="M717 131 l2 2" stroke="#d0d0d0"/><path d="M713 149.5 h9 M713 154.5 h9" stroke="#d0d0d0" stroke-width="1.5"/><circle cx="723" cy="152" r="2.5" fill="#d0d0d0"/><path d="M713.5 182 l3.5 -10 l3.5 10 M715 178 h4" fill="none" stroke="#d0d0d0" stroke-width="1.3"/><path d="M723.5 173 v9" stroke="#d0d0d0"/><path d="M717.5 190 a3 3 0 0 0 0 6 h1 v3 h1.5 v-9z" fill="#d0d0d0"/><path d="M721.5 190 v9" stroke="#d0d0d0" stroke-width="1.2"/></svg>
<!-- PANELS6 -->
<div class="a" style="left:731px;top:39px;width:2px;height:426px;background:#2e2e2e"></div>
</div></body></html>
